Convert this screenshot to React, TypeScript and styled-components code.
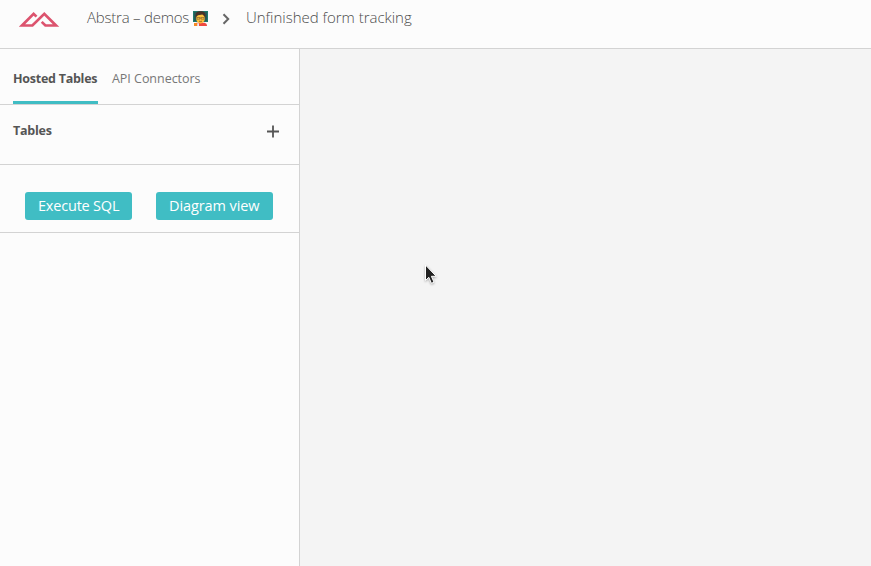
import React from 'react';
import styled, { createGlobalStyle } from 'styled-components';

const Global = createGlobalStyle`
  * { box-sizing: border-box; }
  html, body { margin: 0; overflow: hidden; background: #f4f4f4; }
  body { font-family: 'Open Sans', 'Noto Sans', sans-serif; color: #555; }
  button { font-family: inherit; border: 0; padding: 0; background: none; }
`;

const Page = styled.div`
  display: flex;
  flex-direction: column;
  height: 100vh;
`;

const Header = styled.header`
  display: flex;
  align-items: flex-start;
  height: 49px;
  flex: none;
  padding-left: 18px;
  background: #fcfcfc;
  border-bottom: 1px solid #d3d3d3;
`;

const Logo = styled.svg`
  width: 42px;
  height: 17px;
  margin-top: 11px;
  flex: none;
`;

const Breadcrumb = styled.nav`
  display: flex;
  align-items: center;
  height: 36px;
  margin-left: 27px;
`;

const Crumb = styled.span<{ $width: number; $spacing: number }>`
  width: ${p => p.$width}px;
  flex: none;
  margin-top: -2px;
  font-size: 15px;
  line-height: 20px;
  font-weight: 300;
  letter-spacing: ${p => p.$spacing}px;
  white-space: nowrap;
  color: #4c4c4c;
`;

const Emoji = styled.svg`
  width: 15px;
  height: 15px;
  margin-left: 4px;
  flex: none;
`;

const Chevron = styled.svg`
  width: 8px;
  height: 12px;
  margin: 1px 16px 0 14px;
  flex: none;
`;

const Body = styled.div`
  display: flex;
  flex: 1;
`;

const Sidebar = styled.aside`
  width: 300px;
  flex: none;
  background: #fcfcfc;
  border-right: 1px solid #d3d3d3;
`;

const Canvas = styled.main`
  position: relative;
  flex: 1;
  background: #f4f4f4;
`;

const Tabs = styled.div`
  display: flex;
  gap: 14px;
  height: 56px;
  padding-left: 13px;
  border-bottom: 1px solid #d3d3d3;
`;

const Tab = styled.button<{ $active?: boolean; $width: number; $spacing: number }>`
  width: ${p => p.$width}px;
  height: 55px;
  padding-top: 8px;
  padding-bottom: ${p => (p.$active ? 0 : 3)}px;
  border-bottom: ${p => (p.$active ? '3px solid #40bdc4' : '0')};
  font-size: 12.5px;
  line-height: 18px;
  font-weight: ${p => (p.$active ? 700 : 400)};
  letter-spacing: ${p => p.$spacing}px;
  color: ${p => (p.$active ? '#555' : '#777')};
  text-align: left;
  white-space: nowrap;
`;

const TablesBar = styled.div`
  display: flex;
  justify-content: space-between;
  align-items: flex-start;
  height: 60px;
  padding: 17px 19px 0 13px;
  border-bottom: 1px solid #d3d3d3;
`;

const Heading = styled.h2`
  margin: 0;
  font-size: 12.5px;
  line-height: 18px;
  font-weight: 700;
  letter-spacing: -0.25px;
`;

const Plus = styled.svg`
  width: 13px;
  height: 13px;
  margin-top: 3px;
`;

const Actions = styled.div`
  display: flex;
  gap: 24px;
  height: 68px;
  padding: 27px 0 0 25px;
  border-bottom: 1px solid #d3d3d3;
`;

const ActionButton = styled.button<{ $width: number; $spacing: number }>`
  width: ${p => p.$width}px;
  height: 28px;
  padding: 0 0 1px 13px;
  border-radius: 3px;
  background: #40bdc4;
  color: #fff;
  font-size: 14.5px;
  line-height: 20px;
  letter-spacing: ${p => p.$spacing}px;
  text-align: left;
  white-space: nowrap;
`;

const Pointer = styled.svg`
  position: absolute;
  left: 122px;
  top: 214px;
  width: 17px;
  height: 24px;
  filter: drop-shadow(0 1px 1px rgba(0, 0, 0, 0.3));
`;

export default function App() {
  return (
    <Page>
      <Global />
      <Header>
        <Logo viewBox="0 0 42 17" fill="none" stroke="#dc536e" strokeWidth="2.7">
          <path d="M18.500 5.600 15.600 2.800 4 14.500H14.400L26.300 2.800 38 14.500H27.400L23.700 10.900" />
        </Logo>
        <Breadcrumb>
          <Crumb $width={102} $spacing={-0.22}>Abstra – demos</Crumb>
          <Emoji viewBox="0 0 15 15">
            <path d="M0 0h15v11H0z" fill="#1f7a6c" />
            <path d="M1 1h13v9H1z" fill="#245c58" />
            <path d="M1 15c0-3 2-3.500 6.500-3.500S14 12 14 15z" fill="#ef493f" />
            <path d="M2.800 7C1.500 2 4 .2 7.600.2S13.500 2 12.200 7z" fill="#493329" />
            <ellipse cx="7.500" cy="7.500" rx="4.300" ry="4.900" fill="#fbc13a" />
            <path d="M3 5.800C2.800-.5 12.200-.5 12 5.800L9.500 3.600 5 4.200z" fill="#493329" />
            <path d="M4 6.500h2.800v1.700H4zM8.200 6.500H11v1.700H8.200zM6.800 7h1.400" fill="none" stroke="#65482e" strokeWidth=".5" />
            <path d="M6 10.200q1.500.8 3 0" fill="none" stroke="#85451f" strokeWidth=".7" />
            <path d="M1 12h3v3H1z" fill="#f68a23" />
            <path d="M4.200 12.200h1.800V15H4.200z" fill="#e9eef1" />
          </Emoji>
          <Chevron viewBox="0 0 8 12" fill="none" stroke="#666" strokeWidth="2">
            <path d="m1.500 1.300 4.700 4.700-4.700 4.700" />
          </Chevron>
          <Crumb $width={166} $spacing={-0.02}>Unfinished form tracking</Crumb>
        </Breadcrumb>
      </Header>
      <Body>
        <Sidebar>
          <Tabs>
            <Tab $active $width={85} $spacing={-0.26}>Hosted Tables</Tab>
            <Tab $width={89} $spacing={-0.03}>API Connectors</Tab>
          </Tabs>
          <TablesBar>
            <Heading>Tables</Heading>
            <Plus viewBox="0 0 13 13" stroke="#555" strokeWidth="1.800">
              <path d="M6 .5v12M0 6.500h12" />
            </Plus>
          </TablesBar>
          <Actions>
            <ActionButton $width={107} $spacing={-0.2}>Execute SQL</ActionButton>
            <ActionButton $width={117} $spacing={-0.1}>Diagram view</ActionButton>
          </Actions>
        </Sidebar>
        <Canvas>
          <Pointer viewBox="0 0 17 24">
            <path d="M3.500 2v15.500l3.300-3.200 2.600 6 2.600-1.100-2.600-5.900h4.800z" fill="#222" stroke="#fff" strokeWidth="1" />
          </Pointer>
        </Canvas>
      </Body>
    </Page>
  );
}
